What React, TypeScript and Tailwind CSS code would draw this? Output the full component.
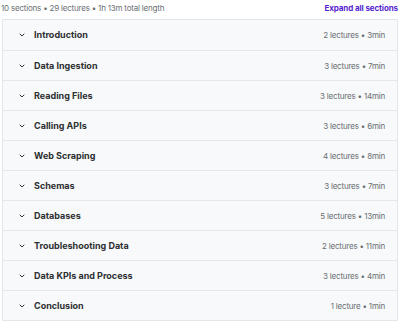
import React from 'react';

const sections = [
  { title: 'Introduction', meta: '2 lectures • 3min' },
  { title: 'Data Ingestion', meta: '3 lectures • 7min' },
  { title: 'Reading Files', meta: '3 lectures • 14min' },
  { title: 'Calling APIs', meta: '3 lectures • 6min' },
  { title: 'Web Scraping', meta: '4 lectures • 8min' },
  { title: 'Schemas', meta: '3 lectures • 7min' },
  { title: 'Databases', meta: '5 lectures • 13min' },
  { title: 'Troubleshooting Data', meta: '2 lectures • 11min' },
  { title: 'Data KPIs and Process', meta: '3 lectures • 4min' },
  { title: 'Conclusion', meta: '1 lecture • 1min' },
];

const Chevron = () => (
  <svg width="8" height="8" viewBox="0 0 24 24" fill="none" stroke="#2d2f31" strokeWidth="3" strokeLinecap="round" strokeLinejoin="round">
    <path d="M6 9l6 6 6-6" />
  </svg>
);

export default function App() {
  return (
    <div className="w-[400px] h-[322px] bg-white px-[2px]" style={{ fontFamily: 'Inter, "Noto Sans", sans-serif' }}>
      <div className="flex items-start justify-between h-[19px] pt-[2px]">
        <span className="text-[8px] tracking-[-0.2px] text-[#6a6f73] -ml-[1px]">10 sections • 29 lectures • 1h 13m total length</span>
        <span className="text-[8px] tracking-[-0.1px] font-bold text-[#5624d0]">Expand all sections</span>
      </div>
      <div className="border border-[#e4e7ea]">
        {sections.map((s, i) => (
          <div
            key={s.title}
            className={`flex items-center justify-between h-[30px] bg-[#f7f9fa] pl-[15px] pr-[12px] ${i > 0 ? 'border-t border-[#e4e7ea]' : ''}`}
          >
            <div className="flex items-center gap-[8px]">
              <Chevron />
              <span className="text-[9px] font-bold text-[#2d2f31]">{s.title}</span>
            </div>
            <span className="text-[8px] tracking-[-0.2px] text-[#6a6f73]">{s.meta}</span>
          </div>
        ))}
      </div>
    </div>
  );
}
